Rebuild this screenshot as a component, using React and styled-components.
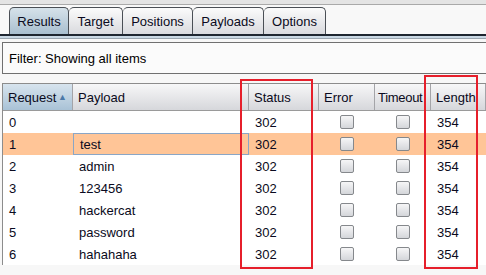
import React from "react";
import styled, { createGlobalStyle } from "styled-components";

const rows = [
  { id: 0, payload: "" },
  { id: 1, payload: "test" },
  { id: 2, payload: "admin" },
  { id: 3, payload: "123456" },
  { id: 4, payload: "hackercat" },
  { id: 5, payload: "password" },
  { id: 6, payload: "hahahaha" },
];

const tabs = [
  { label: "Results", width: 60 },
  { label: "Target", width: 54 },
  { label: "Positions", width: 70 },
  { label: "Payloads", width: 71 },
  { label: "Options", width: 62 },
];

const cols = "70px 176px 70px 56px 56px 46px 1fr";

const GlobalStyle = createGlobalStyle`
  html, body {
    margin: 0;
    padding: 0;
    background: #f7f7f7;
    font-family: "Liberation Sans", Arial, sans-serif;
    font-size: 13px;
    color: #000;
  }
`;

const Page = styled.div`
  position: relative;
  width: 486px;
  height: 275px;
  overflow: hidden;
  background: #f7f7f7;
`;

const TopStrip = styled.div`
  height: 4px;
  background: #e4e4e4;
  border-bottom: 1px solid #a9a9a9;
`;

const TabBar = styled.div`
  display: flex;
  align-items: flex-end;
  height: 29px;
  padding-left: 9px;
  background: #f8f8f8;
  border-bottom: 2px solid #1e2630;
`;

const Tab = styled.div`
  box-sizing: border-box;
  width: ${(p) => p.$w}px;
  height: 27px;
  display: flex;
  align-items: center;
  justify-content: center;
  border: 1px solid #4a4f55;
  border-bottom: none;
  border-left-width: ${(p) => (p.$first ? 1 : 0)}px;
  border-radius: 5px 5px 0 0;
  color: #0a0a20;
  background: ${(p) =>
    p.$active
      ? "linear-gradient(#d6e2ea, #a9bfcf)"
      : "linear-gradient(#fbfbfb, #d9dade)"};
`;

const TabUnder = styled.div`
  height: 2px;
  background: #c9d8e4;
  border-bottom: 1px solid #9aa6b0;
`;

const FilterBox = styled.div`
  margin: 3px 0 0 2px;
  height: 30px;
  display: flex;
  align-items: center;
  padding-left: 6px;
  background: #fbfbfb;
  border: 1px solid #707070;
  border-right: none;
`;

const Table = styled.div`
  margin: 9px 0 0 2px;
  border-left: 1px solid #8c8c8c;
  border-top: 1px solid #8c8c8c;
`;

const Row = styled.div`
  display: grid;
  grid-template-columns: ${cols};
  height: 22px;
  background: ${(p) => (p.$selected ? "#ffc597" : "#ffffff")};
`;

const HeadRow = styled.div`
  display: grid;
  grid-template-columns: ${cols};
  height: 26px;
  border-bottom: 1px solid #9a9a9a;
`;

const HeadCell = styled.div`
  display: flex;
  align-items: center;
  justify-content: space-between;
  padding: 0 ${(p) => (p.$sorted ? 5 : 0)}px 0 ${(p) => (p.$tight ? 3 : 5)}px;
  letter-spacing: ${(p) => (p.$tight ? "-0.3px" : "normal")};
  white-space: nowrap;
  overflow: hidden;
  border-right: 1px solid #a4a4a8;
  background: ${(p) =>
    p.$sorted
      ? "linear-gradient(#d7e4ee, #a9c2d6)"
      : "linear-gradient(#f7f7f8, #d6d7db)"};
  color: #0a0a20;
`;

const SortArrow = styled.span`
  font-size: 9px;
  color: #4c79a8;
`;

const Cell = styled.div`
  display: flex;
  align-items: center;
  justify-content: ${(p) => (p.$center ? "center" : "flex-start")};
  padding-left: ${(p) => (p.$center ? 0 : 6)}px;
  box-sizing: border-box;
  border: ${(p) => (p.$focus ? "1px solid #8aa6c6" : "none")};
  color: #0a0a20;
`;

const Check = styled.span`
  width: 12px;
  height: 12px;
  border: 1px solid #85888c;
  border-radius: 2px;
  background: linear-gradient(#f6f6f7, #d4d6da);
`;

const Highlight = styled.div`
  position: absolute;
  left: ${(p) => p.$x}px;
  top: ${(p) => p.$y}px;
  width: ${(p) => p.$w}px;
  height: ${(p) => p.$h}px;
  box-sizing: border-box;
  border: 2px solid #e61f2b;
  pointer-events: none;
`;

export default function App() {
  return (
    <Page>
      <GlobalStyle />
      <TopStrip />
      <TabBar>
        {tabs.map((t, i) => (
          <Tab key={t.label} $w={t.width} $first={i === 0} $active={i === 0}>
            {t.label}
          </Tab>
        ))}
      </TabBar>
      <TabUnder />
      <FilterBox>Filter: Showing all items</FilterBox>
      <Table>
        <HeadRow>
          <HeadCell $sorted>
            Request <SortArrow>▲</SortArrow>
          </HeadCell>
          <HeadCell>Payload</HeadCell>
          <HeadCell>Status</HeadCell>
          <HeadCell>Error</HeadCell>
          <HeadCell $tight>Timeout</HeadCell>
          <HeadCell>Length</HeadCell>
          <HeadCell />
        </HeadRow>
        {rows.map((r) => (
          <Row key={r.id} $selected={r.id === 1}>
            <Cell>{r.id}</Cell>
            <Cell $focus={r.id === 1}>{r.payload}</Cell>
            <Cell>302</Cell>
            <Cell $center>
              <Check />
            </Cell>
            <Cell $center>
              <Check />
            </Cell>
            <Cell>354</Cell>
            <Cell />
          </Row>
        ))}
      </Table>
      <Highlight $x={240} $y={79} $w={73} $h={190} />
      <Highlight $x={424} $y={75} $w={54} $h={194} />
    </Page>
  );
}
